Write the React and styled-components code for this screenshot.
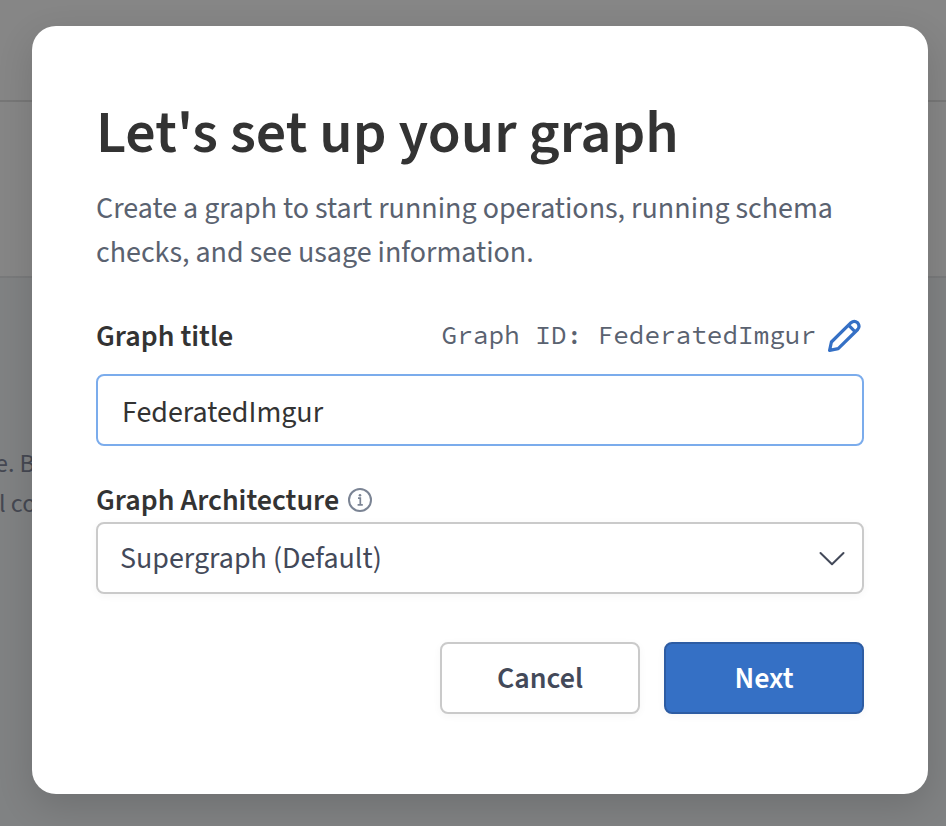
import React from "react";
import styled, { createGlobalStyle } from "styled-components";

const sans = `"Source Sans Pro", "Source Sans 3", "Noto Sans CJK SC", "Noto Sans", sans-serif`;
const mono = `"Source Code Pro", "Noto Sans Mono CJK SC", "Liberation Mono", monospace`;

const GlobalStyle = createGlobalStyle`
  *, *::before, *::after { box-sizing: border-box; }
  body { margin: 0; overflow: hidden; font-family: ${sans}; }
`;

const Page = styled.div`
  position: relative;
  width: 946px;
  height: 826px;
  overflow: hidden;
  background: #808283;
`;
const TopBar = styled.div`
  height: 102px;
  background: #868686;
  border-bottom: 2px solid #777;
`;
const Header = styled.div`
  height: 176px;
  background: #868686;
  border-bottom: 2px solid #797a7b;
`;
const Blurb = styled.p`
  margin: 166px 0 0;
  font-size: 26px;
  line-height: 40px;
  color: #454852;
  white-space: pre;
`;
const BlurbLine = styled.span`
  display: block;
  text-indent: ${(p) => p.$shift}px;
`;
const Overlay = styled.div`
  position: absolute;
  inset: 0;
  padding: 26px 18px 32px 32px;
`;
const Modal = styled.section`
  height: 768px;
  padding: 76px 64px 80px;
  border-radius: 24px;
  background: #fff;
  box-shadow: 0 12px 36px rgba(0, 0, 0, 0.14);
  display: flex;
  flex-direction: column;
`;
const Title = styled.h1`
  margin: 0;
  height: 64px;
  font-size: 60px;
  line-height: 64px;
  font-weight: 600;
  color: #333;
  white-space: nowrap;
`;
const Lead = styled.p`
  margin: 21px 0 0;
  font-size: 30px;
  line-height: 44px;
  color: #5a6270;
  white-space: nowrap;
`;
const FieldHead = styled.div`
  display: flex;
  align-items: center;
  height: 44px;
  margin-top: ${(p) => p.$gap}px;
`;
const Label = styled.label`
  padding-top: 2px;
  font-size: 30px;
  line-height: 42px;
  font-weight: 600;
  color: #333;
  white-space: nowrap;
`;
const GraphId = styled.span`
  margin-left: auto;
  padding-bottom: 2px;
  font-family: ${mono};
  font-size: 26px;
  line-height: 42px;
  color: #5a6270;
  white-space: pre;
`;
const IconButton = styled.button`
  display: flex;
  margin: 0 0 0 10px;
  padding: 0;
  border: 0;
  background: none;
`;
const InfoIcon = styled.svg`
  margin-left: 9px;
`;
const TextField = styled.input`
  height: 72px;
  margin: 16px 0 0;
  padding: 4px 24px 0;
  border: 2px solid #7bacec;
  border-radius: 8px;
  outline: 0;
  font: 400 30px/40px ${sans};
  color: #333;
`;
const SelectField = styled.div`
  display: flex;
  align-items: center;
  justify-content: space-between;
  height: 72px;
  padding: 0 16px 0 22px;
  border: 2px solid #cacaca;
  border-radius: 8px;
  box-shadow: 0 2px 8px rgba(0, 0, 0, 0.04);
  font-size: 30px;
  line-height: 40px;
  color: #434959;
`;
const SelectValue = styled.span`
  padding-top: 2px;
`;
const Actions = styled.div`
  display: flex;
  justify-content: flex-end;
  gap: 24px;
  margin-top: 48px;
`;
const Button = styled.button`
  width: 200px;
  height: 72px;
  padding: 2px 0 0;
  border: 2px solid ${(p) => (p.$primary ? "#2d5ca3" : "#cacaca")};
  border-radius: 8px;
  background: ${(p) => (p.$primary ? "#3570c5" : "#fff")};
  box-shadow: 0 2px 8px rgba(0, 0, 0, 0.04);
  font: 600 30px/40px ${sans};
  color: ${(p) => (p.$primary ? "#fff" : "#434959")};
`;

export default function App() {
  return (
    <Page>
      <GlobalStyle />
      <TopBar />
      <Header />
      <Blurb>
        <BlurbLine $shift={-5}>e. B</BlurbLine>
        <BlurbLine $shift={-1}>l co</BlurbLine>
      </Blurb>
      <Overlay>
        <Modal role="dialog">
          <Title>Let's set up your graph</Title>
          <Lead>
            Create a graph to start running operations, running schema
            <br />
            checks, and see usage information.
          </Lead>
          <FieldHead $gap={39}>
            <Label htmlFor="graph-title">Graph title</Label>
            <GraphId>Graph ID: FederatedImgur</GraphId>
            <IconButton aria-label="Edit graph ID">
              <svg width="38" height="36" viewBox="0 0 38 36" fill="none" stroke="#3570c5" strokeWidth="3.2" strokeLinejoin="round" strokeLinecap="round">
                <path d="M3.6 32.4 L5.4 24 L25 4.7 Q28.2 1.9 31.6 4.7 Q34.4 8.2 31.7 11.5 L12.2 30.6 Z M22.6 7.2 L29.2 13.8" />
              </svg>
            </IconButton>
          </FieldHead>
          <TextField id="graph-title" defaultValue="FederatedImgur" />
          <FieldHead $gap={32}>
            <Label>Graph Architecture</Label>
            <InfoIcon width="24" height="24" viewBox="0 0 24 24" fill="none" stroke="#7b8494" strokeWidth="2">
              <circle cx="12" cy="12" r="11" />
              <path d="M10 10.2h2.3v6.5M9.6 16.8h5.2" strokeWidth="1.7" />
              <circle cx="12" cy="7.2" r="1.3" fill="#7b8494" stroke="none" />
            </InfoIcon>
          </FieldHead>
          <SelectField>
            <SelectValue>Supergraph (Default)</SelectValue>
            <svg width="28" height="28" viewBox="0 0 28 28" fill="none" stroke="#434959" strokeWidth="2" strokeLinecap="round" strokeLinejoin="round">
              <path d="M2.5 9 L14 20.3 L25.5 9" />
            </svg>
          </SelectField>
          <Actions>
            <Button>Cancel</Button>
            <Button $primary>Next</Button>
          </Actions>
        </Modal>
      </Overlay>
    </Page>
  );
}
